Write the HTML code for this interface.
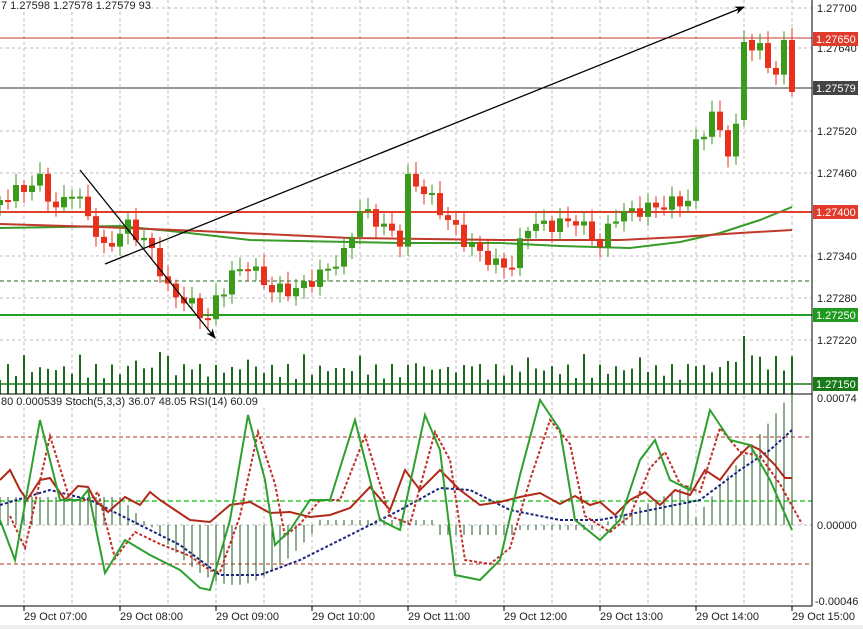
<!DOCTYPE html>
<html><head><meta charset="utf-8"><style>
body{margin:0;background:#fff;width:863px;height:629px;overflow:hidden;font-family:"Liberation Sans",sans-serif}
svg{display:block}
text{font-family:"Liberation Sans",sans-serif;font-size:11px;fill:#222}
</style></head><body>
<svg id="s" width="863" height="629" xmlns="http://www.w3.org/2000/svg">
<defs><marker id="ar" markerWidth="10" markerHeight="8" refX="9" refY="4" orient="auto" markerUnits="userSpaceOnUse"><path d="M0,0 L10,4 L0,8 L3,4 Z" fill="#000"/></marker></defs>
<g id="grid"></g>
<g id="vol"></g>
<g id="lines"></g>
<g id="cand"></g>
<g id="ind"></g>
<g id="ax"></g>
</svg>
<script>
(function(){
var NS="http://www.w3.org/2000/svg";
function el(p,t,a,tx){var e=document.createElementNS(NS,t);for(var k in a)e.setAttribute(k,a[k]);if(tx!=null)e.textContent=tx;document.getElementById(p).appendChild(e);return e;}
function interp(pts,x){for(var i=0;i<pts.length-1;i++){if(x>=pts[i][0]&&x<=pts[i+1][0]){var t=(x-pts[i][0])/(pts[i+1][0]-pts[i][0]);return pts[i][1]+t*(pts[i+1][1]-pts[i][1]);}}return x<pts[0][0]?pts[0][1]:pts[pts.length-1][1];}
function pl(pts){return pts.map(function(p){return p[0]+","+p[1]}).join(" ")}
var R=812,i,x;
for(x=24;x<R;x+=48){el("grid","line",{x1:x,y1:0,x2:x,y2:606,stroke:"#bbb","stroke-dasharray":"3,3","stroke-width":1});}
var pl_=[[5,"1.27700"],[45,"1.27640"],[128,"1.27520"],[170,"1.27460"],[253,"1.27340"],[295,"1.27280"],[337,"1.27220"]];
pl_.forEach(function(p){el("grid","line",{x1:0,y1:p[0]+3,x2:R,y2:p[0]+3,stroke:"#bbb","stroke-dasharray":"3,3"});el("ax","text",{x:817,y:p[0]+7},p[1]);});
[437,564].forEach(function(y){el("grid","line",{x1:0,y1:y,x2:R,y2:y,stroke:"#b03020","stroke-dasharray":"4,3"});});
el("grid","line",{x1:0,y1:525,x2:R,y2:525,stroke:"#bbb","stroke-dasharray":"3,3"});
for(i=0;i<=99;i++){x=i*8;var h=14+Math.abs(Math.sin(i*1.7))*16+(i%7==3?10:0)+(i>90?8:0);if(i==93)h=58;if(i==20)h=42;if(i==21)h=38;el("vol","line",{x1:x,y1:394-h,x2:x,y2:394,stroke:"#1d6a1d","stroke-width":2});}
el("vol","line",{x1:0,y1:384,x2:R,y2:384,stroke:"#1d7a1d","stroke-width":1.5});
el("lines","line",{x1:0,y1:38,x2:R,y2:38,stroke:"#c0392b","stroke-width":1});
el("lines","line",{x1:0,y1:88,x2:R,y2:88,stroke:"#333","stroke-width":1});
el("lines","line",{x1:0,y1:281,x2:R,y2:281,stroke:"#1d6a1d","stroke-dasharray":"4,3"});
el("lines","line",{x1:0,y1:315,x2:R,y2:315,stroke:"#22a022","stroke-width":2});
el("lines","polyline",{points:pl([[0,228],[120,226],[180,232],[250,240],[400,243],[500,243],[560,246],[630,248],[680,242],[720,233],[760,220],[792,207]]),fill:"none",stroke:"#3a9a2a","stroke-width":2});
el("lines","polyline",{points:pl([[0,224],[100,227],[200,231],[350,238],[500,240],[620,240],[680,237],[740,233],[792,230]]),fill:"none",stroke:"#c0392b","stroke-width":2});
el("lines","line",{x1:0,y1:212,x2:R,y2:212,stroke:"#e0402a","stroke-width":2});
var C=[[0,200],[20,190],[40,180],[56,210],[72,190],[88,215],[104,250],[128,225],[152,250],[168,290],[192,305],[208,320],[216,300],[232,275],[248,265],[272,290],[296,290],[320,275],[344,255],[360,210],[376,220],[400,240],[408,180],[424,190],[448,220],[464,240],[496,265],[512,265],[528,225],[552,225],[576,220],[600,245],[616,215],[640,210],[664,205],[688,200],[696,145],[712,115],[728,150],[740,120],[748,45],[760,50],[776,75],[784,45],[792,85]];
var prev=205;
for(i=0;i<=99;i++){x=i*8;var c=interp(C,x)+Math.sin(i*2.3)*7;if(i==93){c=42;prev=120;}if(i==94)prev=40;var o=prev;var tp=Math.min(o,c),bt=Math.max(o,c);if(bt-tp<2)bt=tp+2;var col=c<o?"#3a9a1a":"#e8301c";
el("cand","line",{x1:x,y1:tp-4-Math.abs(Math.sin(i))*8,x2:x,y2:bt+4+Math.abs(Math.cos(i))*7,stroke:col,"stroke-width":1});
el("cand","rect",{x:x-3,y:tp,width:6,height:bt-tp,fill:col});prev=c;}
el("cand","line",{x1:80,y1:170,x2:215,y2:338,stroke:"#000","stroke-width":1.3,"marker-end":"url(#ar)"});
el("cand","line",{x1:105,y1:264,x2:744,y2:7,stroke:"#000","stroke-width":1.3,"marker-end":"url(#ar)"});
el("ind","line",{x1:0,y1:394,x2:R,y2:394,stroke:"#000"});
el("ind","line",{x1:0,y1:501,x2:R,y2:501,stroke:"#33cc33","stroke-width":1.5,"stroke-dasharray":"5,3"});
for(i=0;i<=99;i++){x=i*8;var v;
 if(x<150)v=497+(x>120?(x-120):0);else if(x<320)v=525+Math.sin((x-150)/170*Math.PI)*60;else if(x<440)v=520;else if(x<520)v=535;else if(x<600)v=530;else if(x<690)v=525-(x-600)*0.45;else v=525-(x-690)*1.3;
 if(v>600)v=600;if(v<386)v=386;
 el("ind","line",{x1:x,y1:525,x2:x,y2:v,stroke:"#1d5a1d","stroke-width":1});}
var B=[[0,505],[50,490],[90,500],[130,520],[180,545],[220,575],[260,575],[300,560],[350,535],[400,510],[440,488],[470,490],[510,510],[560,520],[600,520],[650,510],[700,500],[740,470],[770,450],[792,430]];
el("ind","polyline",{points:pl(B),fill:"none",stroke:"#1a237e","stroke-width":2,"stroke-dasharray":"3,2"});
var RS=[[0,480],[10,470],[20,490],[27,500],[40,480],[50,478],[65,500],[78,486],[88,487],[95,500],[108,512],[125,497],[140,505],[150,492],[160,500],[175,510],[190,520],[210,522],[230,505],[250,502],[270,513],[290,512],[310,517],[330,515],[350,508],[370,487],[390,510],[405,470],[420,490],[440,470],[460,490],[480,505],[500,502],[520,497],[540,493],[560,504],[575,496],[590,505],[600,502],[615,515],[630,500],[645,492],[660,505],[675,490],[690,495],[705,470],[720,480],[735,460],[750,445],[760,450],[775,465],[785,478],[792,478]];
el("ind","polyline",{points:pl(RS),fill:"none",stroke:"#b02a1a","stroke-width":2});
var G=[[0,520],[15,560],[40,420],[60,500],[80,500],[88,490],[105,573],[125,540],[150,555],[180,570],[200,588],[210,590],[230,520],[248,415],[265,480],[275,545],[290,530],[310,500],[330,500],[355,420],[380,520],[400,530],[425,415],[440,450],[455,575],[480,580],[500,560],[520,475],[540,400],[560,430],[575,520],[600,540],[620,520],[640,460],[655,440],[670,480],[690,490],[710,410],[730,440],[750,445],[770,480],[792,530]];
var Sg=G.map(function(p){return [p[0]+10,p[1]*0.8+500*0.2]});
el("ind","polyline",{points:pl(Sg),fill:"none",stroke:"#c0302a","stroke-width":2,"stroke-dasharray":"3,2"});
el("ind","polyline",{points:pl(G),fill:"none",stroke:"#2ea02e","stroke-width":2});
el("ind","line",{x1:0,y1:606,x2:R,y2:606,stroke:"#000"});
el("ind","rect",{x:0,y:395,width:300,height:12,fill:"#fff"});
el("ind","text",{x:1,y:405},"80 0.000539 Stoch(5,3,3) 36.07 48.05 RSI(14) 60.09");
el("ind","rect",{x:0,y:0,width:145,height:10,fill:"#fff"});
el("ind","text",{x:1,y:9},"7 1.27598 1.27578 1.27579 93");
el("ax","line",{x1:R,y1:0,x2:R,y2:606,stroke:"#000"});
function lab(y,t,bg,fg){el("ax","rect",{x:813,y:y-7,width:45,height:14,fill:bg});el("ax","text",{x:816,y:y+4,style:"fill:"+fg},t);}
lab(39,"1.27650","#e03a2a","#fff");lab(88,"1.27579","#444","#fff");lab(212,"1.27400","#e03a2a","#fff");lab(315,"1.27250","#1f9a1f","#fff");lab(384,"1.27150","#1a7a1a","#fff");
el("ax","text",{x:817,y:402},"0.00074");el("ax","text",{x:817,y:529},"0.00000");el("ax","text",{x:815,y:605},"-0.00046");
["07:00","08:00","09:00","10:00","11:00","12:00","13:00","14:00","15:00"].forEach(function(t,k){var x=24+96*k;el("ax","line",{x1:x,y1:606,x2:x,y2:611,stroke:"#000"});el("ax","text",{x:x,y:620},"29 Oct "+t);});
el("ax","rect",{x:0,y:625,width:863,height:4,fill:"#eee"});
})();
</script>
</body></html>
